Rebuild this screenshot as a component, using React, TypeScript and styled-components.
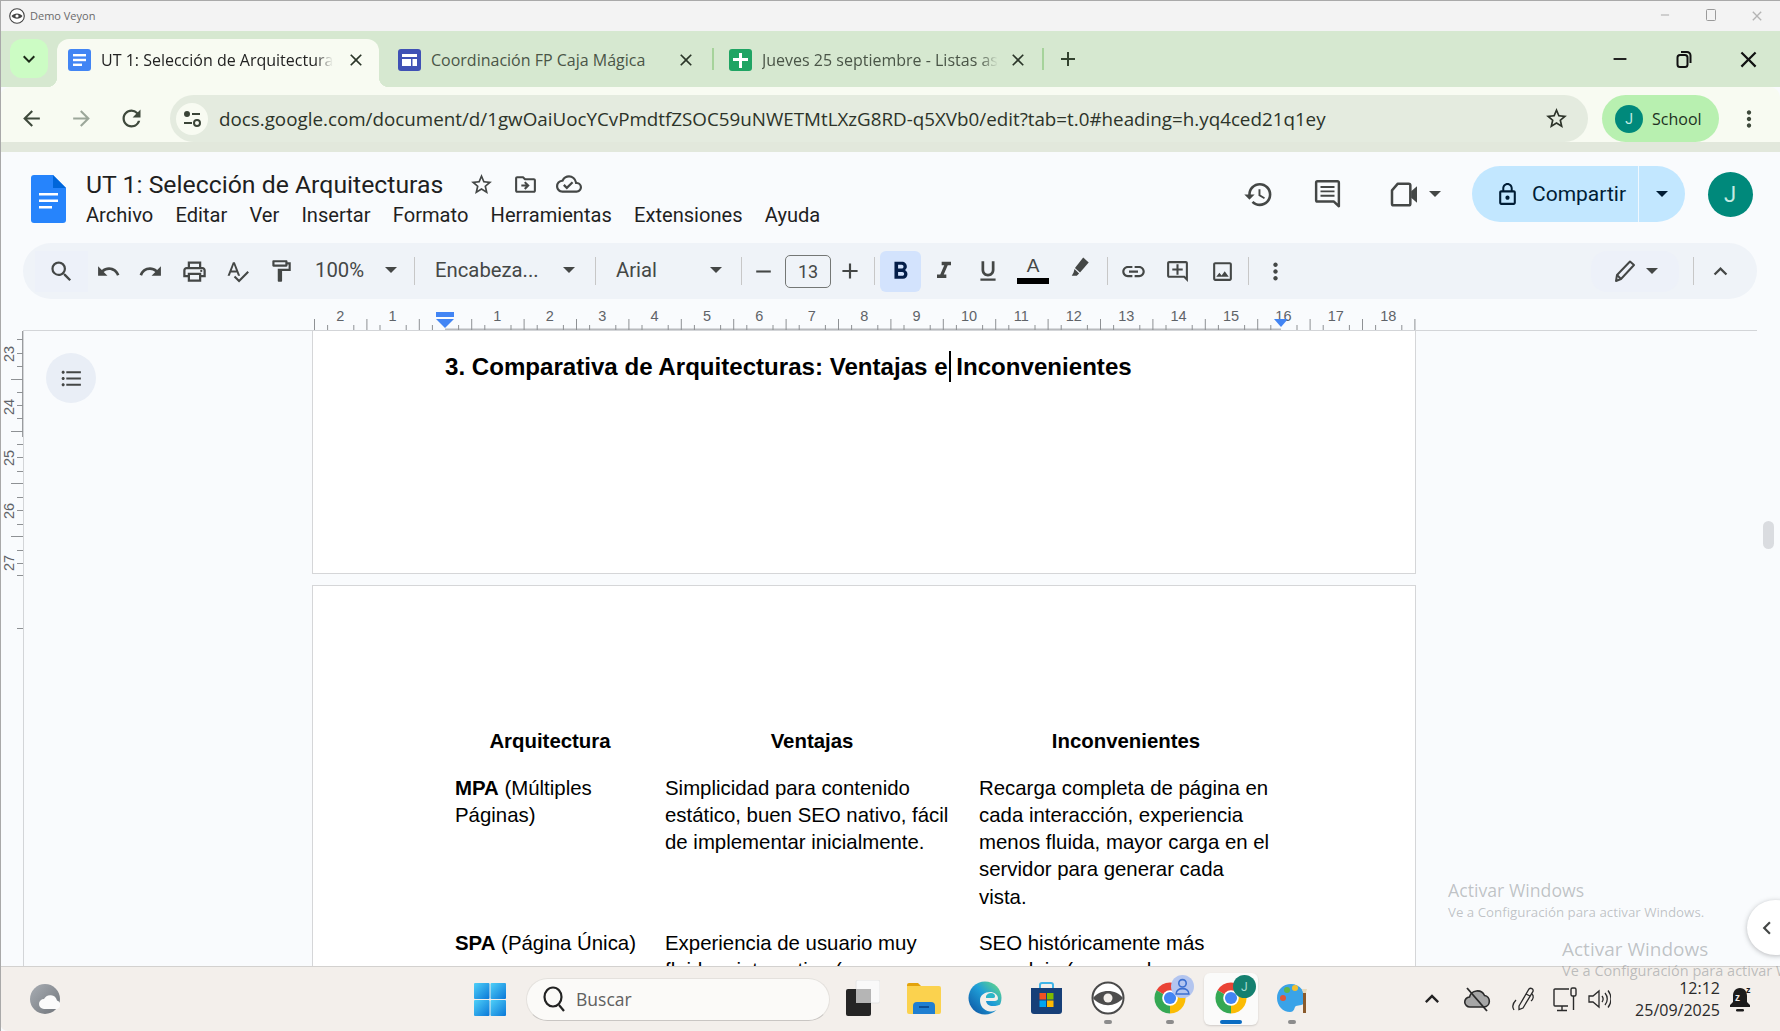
import React from 'react'
import styled, { createGlobalStyle } from 'styled-components'
import {
  MdAdd, MdArrowBack, MdArrowForward, MdClose, MdExpandLess, MdFormatBold, MdFormatItalic,
  MdFormatListBulleted, MdFormatUnderlined, MdHistory, MdKeyboardArrowDown, MdKeyboardArrowUp, MdLink,
  MdLockOutline, MdMoreVert, MdOutlineAddComment, MdOutlineCloudDone, MdOutlineDriveFileMove,
  MdOutlineFormatPaint, MdOutlineImage, MdOutlinePrint, MdRedo, MdRefresh,
  MdRemove, MdSearch, MdSpellcheck, MdStarBorder, MdUndo, MdChevronLeft,
} from 'react-icons/md'

const GlobalStyle = createGlobalStyle`
  html, body { margin: 0; padding: 0; background: #f9fbfd; }
  * { box-sizing: border-box; }
`

const UI = `"Open Sans", "Noto Sans", sans-serif`
const DOCS = `Roboto, "Noto Sans", sans-serif`
const ARIAL = `"Liberation Sans", Arial, sans-serif`

const Screen = styled.div`
  position: relative;
  width: 1780px;
  height: 1031px;
  overflow: hidden;
  display: flex;
  flex-direction: column;
  font-family: ${UI};
  background: #f9fbfd;
  &::after {
    content: '';
    position: absolute;
    inset: 0;
    border-top: 1px solid #a9a9a9;
    border-left: 1px solid #a9a9a9;
    pointer-events: none;
  }
`

/* window title */
const TitleBar = styled.div`
  height: 31px;
  flex: none;
  background: #f3f3f3;
  display: flex;
  align-items: center;
  padding-left: 9px;
  color: #6a6a6a;
  font-size: 11px;
`
const TitleText = styled.span`
  margin-left: 5px;
`
const TitleControls = styled.div`
  margin-left: auto;
  display: flex;
  color: #b4b4b4;
`
const TitleControl = styled.div`
  width: 46px;
  display: flex;
  justify-content: center;
`

/* tabs */
const TabStrip = styled.div`
  height: 56px;
  flex: none;
  background: #d6e8d0;
  display: flex;
  padding-top: 8px;
  color: #3a4a36;
`
const TabMenu = styled.div`
  width: 38px;
  height: 39px;
  margin: 0 9px 0 10px;
  border-radius: 12px;
  background: #ccfcc4;
  display: flex;
  align-items: center;
  justify-content: center;
  color: #1c2a19;
`
const Tab = styled.div<{ $w: number; $pl: number; $pr: number; $sep?: boolean }>`
  position: relative;
  width: ${p => p.$w}px;
  height: 48px;
  padding: 0 ${p => p.$pr}px 6px ${p => p.$pl}px;
  display: flex;
  align-items: center;
  color: #4a5547;
  ${p =>
    p.$sep &&
    `&::after { content: ''; position: absolute; right: 0; top: 9px; height: 22px; width: 2px; background: #a6d39b; }`}
`
const ActiveTab = styled(Tab)`
  background: #f8fbf2;
  border-radius: 12px 12px 0 0;
  color: #222;
  &::before,
  &::after {
    content: '';
    position: absolute;
    bottom: 0;
    width: 10px;
    height: 10px;
  }
  &::before {
    left: -10px;
    background: radial-gradient(circle at 0 0, transparent 10px, #f8fbf2 10.5px);
  }
  &::after {
    right: -10px;
    background: radial-gradient(circle at 100% 0, transparent 10px, #f8fbf2 10.5px);
  }
`
const TabIcon = styled.div<{ $bg: string }>`
  width: 23px;
  height: 22px;
  flex: none;
  border-radius: 3px;
  background: ${p => p.$bg};
  display: flex;
  align-items: center;
  justify-content: center;
`
const TabTitle = styled.div<{ $mr?: number }>`
  flex: 1;
  margin: 0 ${p => p.$mr || 0}px 0 10px;
  white-space: nowrap;
  overflow: hidden;
  font-size: 16px;
  -webkit-mask-image: linear-gradient(to left, transparent 0, #000 18px);
`
const TabTitleFull = styled(TabTitle)`
  -webkit-mask-image: none;
`
const TabClose = styled.div`
  width: 24px;
  flex: none;
  display: flex;
  justify-content: center;
  color: #2a3528;
`
const NewTab = styled.div`
  width: 24px;
  height: 40px;
  margin-left: 12px;
  display: flex;
  align-items: center;
  justify-content: center;
  color: #33432f;
`
const WinControls = styled.div`
  margin-left: auto;
  display: flex;
  height: 40px;
`
const WinControl = styled.div`
  width: 64px;
  display: flex;
  align-items: center;
  justify-content: center;
  color: #111;
`

/* address bar */
const NavBar = styled.div`
  height: 55px;
  flex: none;
  background: #f8fbf2;
  border-radius: 10px 10px 0 0;
  display: flex;
  padding-top: 8px;
  padding-left: 6px;
  color: #3f4a3c;
`
const NavButton = styled.div<{ $dim?: boolean }>`
  width: 50px;
  height: 47px;
  display: flex;
  align-items: center;
  justify-content: center;
  color: ${p => (p.$dim ? '#9ca79a' : '#3f4a3c')};
`
const Omnibox = styled.div`
  width: 1418px;
  height: 47px;
  margin-left: 14px;
  padding: 0 19px 0 6px;
  border-radius: 24px;
  background: #e4ebdf;
  display: flex;
  align-items: center;
`
const SiteChip = styled.div`
  width: 32px;
  height: 32px;
  border-radius: 50%;
  background: #f8fbf2;
  display: flex;
  align-items: center;
  justify-content: center;
`
const UrlText = styled.div`
  margin-left: 11px;
  font-size: 18.8px;
  color: #2c3329;
  white-space: nowrap;
`
const OmniStar = styled.div`
  margin-left: auto;
  display: flex;
  color: #2c3329;
`
const ProfilePill = styled.div`
  width: 117px;
  height: 47px;
  margin-left: 14px;
  padding-left: 13px;
  border-radius: 24px;
  background: #b8f0b0;
  display: flex;
  align-items: center;
  gap: 9px;
  font-size: 16px;
  color: #21301f;
`
const Avatar = styled.div<{ $size: number; $font: number }>`
  width: ${p => p.$size}px;
  height: ${p => p.$size}px;
  flex: none;
  border-radius: 50%;
  background: #00897b;
  color: #c4ebe3;
  font-family: ${DOCS};
  font-size: ${p => p.$font}px;
  display: flex;
  align-items: center;
  justify-content: center;
`
const NavMenu = styled.div`
  width: 30px;
  height: 47px;
  margin-left: 15px;
  display: flex;
  align-items: center;
  justify-content: center;
`
const NavShade = styled.div`
  height: 10px;
  flex: none;
  background: #e2e8dc;
`

/* docs header */
const DocHeader = styled.div`
  height: 91px;
  flex: none;
  display: flex;
  padding: 0 28px 0 31px;
  font-family: ${DOCS};
`
const DocLogo = styled.svg`
  width: 35px;
  height: 48px;
  margin-top: 23px;
  flex: none;
`
const DocTitles = styled.div`
  margin-left: 20px;
  padding-top: 19px;
`
const DocTitleRow = styled.div`
  display: flex;
  align-items: center;
  height: 26px;
  color: #444746;
`
const DocTitle = styled.div`
  font-size: 24.8px;
  color: #1f1f1f;
  margin-right: 16px;
  white-space: nowrap;
`
const TitleIcon = styled.div`
  width: 44px;
  display: flex;
  justify-content: center;
`
const MenuRow = styled.div`
  display: flex;
  gap: 22.2px;
  margin-top: 5px;
  height: 26px;
  align-items: center;
  font-size: 20.1px;
  color: #1f1f1f;
`
const HeaderRight = styled.div`
  margin-left: auto;
  margin-top: 14px;
  height: 56px;
  display: flex;
  align-items: center;
  color: #444746;
`
const HeaderIcon = styled.div<{ $ml?: number }>`
  width: 44px;
  margin-left: ${p => p.$ml || 0}px;
  display: flex;
  justify-content: center;
`
const Caret = styled.span<{ $ml?: number; $color?: string }>`
  display: inline-block;
  flex: none;
  width: 0;
  height: 0;
  margin-left: ${p => p.$ml || 0}px;
  border-left: 6px solid transparent;
  border-right: 6px solid transparent;
  border-top: 6px solid ${p => p.$color || '#444746'};
`
const ShareButton = styled.div`
  width: 213px;
  height: 56px;
  margin-left: 31px;
  border-radius: 28px;
  background: #c2e7ff;
  display: flex;
  color: #001d35;
  font-size: 21px;
`
const ShareMain = styled.div`
  width: 167px;
  padding-left: 23px;
  border-right: 1px solid #f0f8ff;
  display: flex;
  align-items: center;
  gap: 12px;
`
const ShareMore = styled.div`
  flex: 1;
  display: flex;
  align-items: center;
  justify-content: center;
`

/* docs toolbar */
const EditBar = styled.div`
  height: 56px;
  flex: none;
  margin: 0 23px;
  padding: 0 11px 0 12px;
  border-radius: 28px;
  background: #eff3f8;
  display: flex;
  align-items: center;
  color: #444746;
  font-family: ${DOCS};
`
const Cell = styled.div<{ $w: number; $active?: boolean; $tint?: boolean }>`
  width: ${p => p.$w}px;
  height: 41px;
  flex: none;
  display: flex;
  align-items: center;
  justify-content: center;
  border-radius: ${p => (p.$active ? '6px' : '0')};
  background: ${p => (p.$active ? '#d3e3fd' : p.$tint ? '#edf1f9' : 'transparent')};
  color: ${p => (p.$active ? '#041e49' : 'inherit')};
`
const Sep = styled.div<{ $ml?: number; $mr?: number }>`
  width: 1px;
  height: 28px;
  flex: none;
  margin: 0 ${p => p.$mr || 0}px 0 ${p => p.$ml || 0}px;
  background: #c7c7c7;
`
const Dropdown = styled.div<{ $w: number; $pl: number; $pr: number }>`
  width: ${p => p.$w}px;
  padding: 0 ${p => p.$pr}px 2px ${p => p.$pl}px;
  flex: none;
  display: flex;
  align-items: center;
  justify-content: space-between;
  font-size: 20.3px;
`
const SizeBox = styled.div`
  width: 46px;
  height: 33px;
  flex: none;
  border: 1px solid #747775;
  border-radius: 5px;
  display: flex;
  align-items: center;
  justify-content: center;
  font-size: 18px;
`
const ColorA = styled.div`
  width: 32px;
  display: flex;
  flex-direction: column;
  align-items: center;
  font-family: ${ARIAL};
  font-size: 19px;
  line-height: 20px;
  margin-top: -2px;
`
const ColorBar = styled.div`
  width: 100%;
  height: 6px;
  background: #000;
  margin-top: 2px;
`
const HighlighterWrap = styled.div`
  display: flex;
  margin-top: -6px;
`
const ModeCell = styled.div`
  width: 88px;
  height: 41px;
  margin-left: auto;
  flex: none;
  border-radius: 16px;
  background: #edf1f9;
  display: flex;
  align-items: center;
  justify-content: center;
  gap: 9px;
`

/* rulers */
const RulerRow = styled.div`
  height: 32px;
  flex: none;
  margin: 0 23px;
  border-bottom: 1px solid #d3d5d8;
  padding-left: 289px;
`
const RulerSvg = styled.svg`
  display: block;
  overflow: visible;
`
const Workspace = styled.div`
  position: relative;
  flex: none;
  height: 635px;
  overflow: hidden;
  display: flex;
`
const SideRuler = styled.div`
  width: 23px;
  flex: none;
`
const Gutter = styled.div`
  width: 289px;
  flex: none;
  border-left: 1px solid #d3d5d8;
  padding: 22px 0 0 22px;
`
const OutlineButton = styled.div`
  width: 50px;
  height: 50px;
  border-radius: 50%;
  background: #e9eef6;
  display: flex;
  align-items: center;
  justify-content: center;
  color: #444746;
`
const Pages = styled.div`
  width: 1104px;
  flex: none;
  display: flex;
  flex-direction: column;
  gap: 11px;
`
const Page = styled.div<{ $h: number; $first?: boolean }>`
  height: ${p => p.$h}px;
  flex: none;
  background: #fff;
  border: 1px solid #d5d6d8;
  border-top: ${p => (p.$first ? 'none' : '1px solid #d5d6d8')};
  border-bottom: ${p => (p.$first ? '1px solid #d5d6d8' : 'none')};
  overflow: hidden;
  font-family: ${ARIAL};
  color: #000;
`
const Heading = styled.div`
  margin: 19px 0 0 132px;
  font-size: 24.1px;
  line-height: 34px;
  font-weight: 700;
  white-space: nowrap;
`
const TextCursor = styled.span`
  display: inline-block;
  width: 2px;
  height: 31px;
  margin: 0 0 -7px 1px;
  background: #000;
`
const CursorTail = styled.span`
  margin-left: -1px;
`
const Table = styled.div`
  margin: 142px 0 0 132px;
  display: grid;
  grid-template-columns: 210px 314px 314px;
  row-gap: 19.5px;
  font-size: 20.4px;
  line-height: 27.2px;
`
const HeadCell = styled.div`
  text-align: center;
  font-weight: 700;
`
const BodyCell = styled.div`
  padding: 0 10px;
  white-space: nowrap;
`
const Scrollbar = styled.div`
  position: absolute;
  top: 190px;
  right: 6px;
  width: 11px;
  height: 28px;
  border-radius: 6px;
  background: #dadce0;
`
const SideToggle = styled.div`
  position: absolute;
  top: 569px;
  right: -24px;
  width: 57px;
  height: 55px;
  padding-left: 7px;
  border-radius: 50%;
  background: #fff;
  box-shadow: 0 1px 5px rgba(60, 64, 67, 0.35);
  display: flex;
  align-items: center;
  color: #444746;
`

/* watermarks */
const Watermark = styled.div<{ $left: number; $top: number }>`
  position: absolute;
  left: ${p => p.$left}px;
  top: ${p => p.$top}px;
  color: rgba(110, 115, 120, 0.42);
  white-space: nowrap;
  pointer-events: none;
  z-index: 3;
`
const WatermarkTitle = styled.div<{ $size: number }>`
  font-size: ${p => p.$size}px;
  line-height: 25px;
`
const WatermarkSub = styled.div<{ $size: number }>`
  font-size: ${p => p.$size}px;
  line-height: 18px;
`

/* taskbar */
const Taskbar = styled.div`
  height: 65px;
  flex: none;
  background: #f3efeb;
  border-top: 1px solid #d3d1cf;
  border-radius: 0 0 0 8px;
  display: flex;
  align-items: center;
  padding: 0 18px 0 30px;
`
const WeatherIcon = styled.svg`
  width: 30px;
  height: 34px;
  flex: none;
`
const StartIcon = styled.svg`
  width: 32px;
  height: 33px;
  margin-left: 414px;
  flex: none;
`
const SearchPill = styled.div`
  width: 304px;
  height: 43px;
  margin: 0 2px 0 20px;
  padding-left: 15px;
  border-radius: 22px;
  background: #fbfaf8;
  border: 1px solid #e4e1dd;
  border-bottom-color: #c9c6c3;
  display: flex;
  align-items: center;
  gap: 9px;
  font-size: 17.5px;
  color: #606060;
`
const TaskCell = styled.div<{ $active?: boolean }>`
  position: relative;
  width: 61.4px;
  height: 52px;
  flex: none;
  display: flex;
  align-items: center;
  justify-content: center;
  padding-bottom: 2px;
  &::before {
    content: '';
    position: absolute;
    inset: 0 4px;
    border-radius: 6px;
    background: ${p => (p.$active ? '#fbfbfa' : 'transparent')};
    box-shadow: ${p => (p.$active ? '0 1px 2px rgba(0,0,0,.15)' : 'none')};
  }
  & > * {
    position: relative;
  }
`
const RunDot = styled.div<{ $active?: boolean }>`
  position: absolute !important;
  bottom: 1px;
  left: 50%;
  transform: translateX(-50%);
  width: ${p => (p.$active ? 22 : 8)}px;
  height: 4px;
  border-radius: 2px;
  background: ${p => (p.$active ? '#0a6cc2' : '#8c8c8c')};
`
const ProfileBadge = styled.div<{ $bg: string }>`
  position: absolute !important;
  top: 2px;
  right: 6px;
  width: 23px;
  height: 23px;
  border-radius: 50%;
  background: ${p => p.$bg};
  color: #a9dcd2;
  font-size: 12px;
  font-family: ${DOCS};
  display: flex;
  align-items: center;
  justify-content: center;
`
const Tray = styled.div`
  margin-left: auto;
  display: flex;
  align-items: center;
  color: #222;
`
const TrayCell = styled.div<{ $w: number }>`
  width: ${p => p.$w}px;
  flex: none;
  display: flex;
  justify-content: center;
`
const Clock = styled.div`
  width: 108px;
  text-align: right;
  font-size: 16px;
  line-height: 22px;
  color: #2a2a2a;
`

const ChromeIcon = ({ size }: { size: number }) => (
  <svg width={size} height={size} viewBox="0 0 48 48">
    <path d="M24 24L43.05 13A22 22 0 0 0 4.95 13Z" fill="#ea4335" />
    <path d="M24 24L4.95 13A22 22 0 0 0 24 46Z" fill="#34a853" />
    <path d="M24 24L24 46A22 22 0 0 0 43.05 13Z" fill="#fbbc04" />
    <circle cx="24" cy="24" r="11" fill="#fff" />
    <circle cx="24" cy="24" r="8.6" fill="#4285f4" />
  </svg>
)

const TabDocIcon = () => (
  <svg width="13" height="12" viewBox="0 0 13 12" fill="#fff">
    <rect y="0" width="13" height="2.4" />
    <rect y="4.8" width="13" height="2.4" />
    <rect y="9.6" width="9" height="2.4" />
  </svg>
)
const TabFormIcon = () => (
  <svg width="15" height="12" viewBox="0 0 15 12" fill="#fff">
    <rect width="15" height="3" />
    <rect y="5" width="9" height="7" />
    <rect x="10.5" y="5" width="4.5" height="7" />
  </svg>
)
const TabSheetIcon = () => (
  <svg width="15" height="15" viewBox="0 0 15 15" fill="#fff">
    <rect y="5" width="15" height="3" />
    <rect x="6" width="3" height="15" />
  </svg>
)

const SiteInfoIcon = () => (
  <svg width="18" height="20" viewBox="0 0 18 20" fill="none" stroke="#3a4437" strokeWidth="2">
    <circle cx="4" cy="5" r="2" fill="#3a4437" />
    <path d="M9 5h8" />
    <path d="M1 14h8" />
    <circle cx="14" cy="14" r="3" />
  </svg>
)

const RestoreIcon = () => (
  <svg width="16" height="18" viewBox="0 0 16 18" fill="none" stroke="#111" strokeWidth="2">
    <rect x="1.5" y="5" width="10" height="12" rx="2.5" />
    <path d="M5 2h6a3.5 3.5 0 0 1 3.5 3.5V13" />
  </svg>
)

const HighlighterIcon = () => (
  <svg width="22" height="24" viewBox="0 0 24 26" fill="#444746">
    <path d="M15.5 1.5L21.5 7L12 18L6.5 13Z" />
    <path d="M6 14L11 19L8.5 21.5L3 21.5L5 18Z" />
  </svg>
)

const PencilIcon = () => (
  <svg width="24" height="24" viewBox="0 0 24 24" fill="none" stroke="#444746" strokeWidth="2" strokeLinejoin="round">
    <path d="M3 22L4 16L17 2.5L21 6L8 20Z" />
    <path d="M4 16L8 20" />
  </svg>
)

const CommentLinesIcon = () => (
  <svg width="27" height="28" viewBox="0 0 30 32" fill="none" stroke="#444746" strokeWidth="2.8">
    <path d="M28 30V3a1.5 1.5 0 0 0-1.5-1.5H3.500A1.5 1.5 0 0 0 2 3v20a1.5 1.5 0 0 0 1.5 1.5H22Z" strokeLinejoin="round" />
    <path d="M7 8h16M7 13h16M7 18h16" strokeWidth="2.2" />
  </svg>
)

const VideoIcon = () => (
  <svg width="29" height="25" viewBox="0 0 34 30" fill="none">
    <path d="M9 2h13a2 2 0 0 1 2 2v22a2 2 0 0 1-2 2H4a2 2 0 0 1-2-2V10Z" stroke="#444746" strokeWidth="3" strokeLinejoin="round" />
    <path d="M25 11l7-6v20l-7-6Z" fill="#444746" />
  </svg>
)

const CloudOffIcon = () => (
  <svg width="28" height="26" viewBox="0 0 28 26">
    <path d="M7 21a5 5 0 0 1-.5-10A8 8 0 0 1 21.5 9.5 5.8 5.8 0 0 1 21 21Z" fill="#a6a6a6" stroke="#2a2a2a" strokeWidth="1.6" />
    <path d="M4 2L24 25" stroke="#2a2a2a" strokeWidth="1.8" />
  </svg>
)

const ruleXTicks = Array.from({ length: 85 }, (_, i) => i - 10).filter(k => 133 + k * 13.1 <= 1104)
const sideTicks = [339, 366, 392, 418, 444, 471, 497, 524, 550, 575, 628]
const sideLongTicks = [379, 431, 483, 536]
const sideNumbers: [string, number][] = [['23', 354], ['24', 407], ['25', 458], ['26', 511], ['27', 563]]

const TopRuler = () => (
  <RulerSvg width="1104" height="31" viewBox="0 0 1104 31">
    <rect x="133" y="29.5" width="836" height="1.5" fill="#b8babd" />
    {ruleXTicks.map(k => {
      const x = 133 + k * 13.1
      const m = ((k % 4) + 4) % 4
      if (m === 0) return null
      return <rect key={k} x={x} y={m === 2 ? 20 : 26} width="1" height={m === 2 ? 11 : 5} fill="#8e9194" />
    })}
    {ruleXTicks
      .filter(k => k % 4 === 0 && k !== 0)
      .map(k => (
        <text key={k} x={133 + k * 13.1} y="22" textAnchor="middle" fontFamily={ARIAL} fontSize="14.5" fill="#5f6368">
          {Math.abs(k / 4)}
        </text>
      ))}
    <rect x="124" y="13" width="18" height="5" fill="#4285f4" />
    <path d="M124 20H142L133 29Z" fill="#4285f4" />
    <path d="M962 20H976L969 28Z" fill="#4285f4" />
  </RulerSvg>
)

const LeftRuler = () => (
  <RulerSvg width="23" height="635" viewBox="0 331 23 635">
    <rect x="22" y="331" width="1" height="106" fill="#9a9c9f" />
    {sideTicks.map(y => (
      <rect key={y} x="17" y={y} width="6" height="1" fill="#8e9194" />
    ))}
    {[353, 405, 457, 510, 563].map(y => (
      <rect key={y} x="17" y={y} width="6" height="1" fill="#8e9194" />
    ))}
    {sideLongTicks.map(y => (
      <rect key={y} x="11" y={y} width="12" height="1" fill="#8e9194" />
    ))}
    {sideNumbers.map(([n, y]) => (
      <text key={n} transform={`translate(14 ${y}) rotate(-90)`} textAnchor="middle" fontFamily={ARIAL} fontSize="14.5" fill="#5f6368">
        {n}
      </text>
    ))}
  </RulerSvg>
)

const App = () => (
  <Screen>
    <GlobalStyle />
    <TitleBar>
      <svg width="16" height="16" viewBox="0 0 16 16">
        <circle cx="8" cy="8" r="7.3" fill="#fff" stroke="#444" strokeWidth="1.1" />
        <path d="M2.5 8C5 4.5 11 4.5 13.5 8C11 11.5 5 11.5 2.5 8Z" fill="#444" />
        <circle cx="8" cy="8" r="1.6" fill="#fff" />
      </svg>
      <TitleText>Demo Veyon</TitleText>
      <TitleControls>
        <TitleControl>
          <MdRemove size={14} />
        </TitleControl>
        <TitleControl>
          <svg width="12" height="14" viewBox="0 0 12 14" fill="none" stroke="#9a9a9a">
            <rect x="1.5" y="1.5" width="9" height="11" rx="1" />
          </svg>
        </TitleControl>
        <TitleControl>
          <MdClose size={16} />
        </TitleControl>
      </TitleControls>
    </TitleBar>

    <TabStrip>
      <TabMenu>
        <MdKeyboardArrowDown size={24} />
      </TabMenu>
      <ActiveTab $w={322} $pl={11} $pr={11}>
        <TabIcon $bg="#4285f4">
          <TabDocIcon />
        </TabIcon>
        <TabTitle $mr={11}>UT 1: Selección de Arquitecturas</TabTitle>
        <TabClose>
          <MdClose size={20} />
        </TabClose>
      </ActiveTab>
      <Tab $w={335} $pl={19} $pr={16} $sep>
        <TabIcon $bg="#3f51b5">
          <TabFormIcon />
        </TabIcon>
        <TabTitleFull>Coordinación FP Caja Mágica</TabTitleFull>
        <TabClose>
          <MdClose size={20} />
        </TabClose>
      </Tab>
      <Tab $w={330} $pl={15} $pr={14} $sep>
        <TabIcon $bg="#1fa463">
          <TabSheetIcon />
        </TabIcon>
        <TabTitle $mr={8}>Jueves 25 septiembre - Listas asistencia</TabTitle>
        <TabClose>
          <MdClose size={20} />
        </TabClose>
      </Tab>
      <NewTab>
        <MdAdd size={26} />
      </NewTab>
      <WinControls>
        <WinControl>
          <MdRemove size={22} />
        </WinControl>
        <WinControl>
          <RestoreIcon />
        </WinControl>
        <WinControl>
          <MdClose size={27} />
        </WinControl>
      </WinControls>
    </TabStrip>

    <NavBar>
      <NavButton>
        <MdArrowBack size={25} />
      </NavButton>
      <NavButton $dim>
        <MdArrowForward size={25} />
      </NavButton>
      <NavButton>
        <MdRefresh size={27} />
      </NavButton>
      <Omnibox>
        <SiteChip>
          <SiteInfoIcon />
        </SiteChip>
        <UrlText>docs.google.com/document/d/1gwOaiUocYCvPmdtfZSOC59uNWETMtLXzG8RD-q5XVb0/edit?tab=t.0#heading=h.yq4ced21q1ey</UrlText>
        <OmniStar>
          <MdStarBorder size={25} />
        </OmniStar>
      </Omnibox>
      <ProfilePill>
        <Avatar $size={28} $font={14}>J</Avatar>
        School
      </ProfilePill>
      <NavMenu>
        <MdMoreVert size={26} />
      </NavMenu>
    </NavBar>
    <NavShade />

    <DocHeader>
      <DocLogo viewBox="0 0 35 48">
        <path d="M22 0H3a3 3 0 0 0-3 3v42a3 3 0 0 0 3 3h29a3 3 0 0 0 3-3V13z" fill="#2684fc" />
        <path d="M22 0l13 13H22z" fill="#0066da" />
        <path d="M8 18h19v2.4H8zM8 24.5h19v2.4H8zM8 31h13v2.4H8z" fill="#fff" />
      </DocLogo>
      <DocTitles>
        <DocTitleRow>
          <DocTitle>UT 1: Selección de Arquitecturas</DocTitle>
          <TitleIcon>
            <MdStarBorder size={25} />
          </TitleIcon>
          <TitleIcon>
            <MdOutlineDriveFileMove size={25} />
          </TitleIcon>
          <TitleIcon>
            <MdOutlineCloudDone size={26} />
          </TitleIcon>
        </DocTitleRow>
        <MenuRow>
          <span>Archivo</span>
          <span>Editar</span>
          <span>Ver</span>
          <span>Insertar</span>
          <span>Formato</span>
          <span>Herramientas</span>
          <span>Extensiones</span>
          <span>Ayuda</span>
        </MenuRow>
      </DocTitles>
      <HeaderRight>
        <HeaderIcon>
          <MdHistory size={31} />
        </HeaderIcon>
        <HeaderIcon $ml={25}>
          <CommentLinesIcon />
        </HeaderIcon>
        <HeaderIcon $ml={33}>
          <VideoIcon />
        </HeaderIcon>
        <Caret $ml={3} />
        <ShareButton>
          <ShareMain>
            <MdLockOutline size={25} />
            Compartir
          </ShareMain>
          <ShareMore>
            <Caret $color="#001d35" />
          </ShareMore>
        </ShareButton>
        <HeaderIcon $ml={23}>
          <Avatar $size={45} $font={22}>J</Avatar>
        </HeaderIcon>
      </HeaderRight>
    </DocHeader>

    <EditBar>
      <Cell $w={53} $tint><MdSearch size={27} /></Cell>
      <Cell $w={41}><MdUndo size={25} /></Cell>
      <Cell $w={43}><MdRedo size={25} /></Cell>
      <Cell $w={44}><MdOutlinePrint size={27} /></Cell>
      <Cell $w={43}><MdSpellcheck size={25} /></Cell>
      <Cell $w={43}><MdOutlineFormatPaint size={26} /></Cell>
      <Dropdown $w={112} $pl={13} $pr={17}>100%<Caret /></Dropdown>
      <Sep />
      <Dropdown $w={180} $pl={20} $pr={20}>Encabeza...<Caret /></Dropdown>
      <Sep />
      <Dropdown $w={145} $pl={20} $pr={19}>Arial<Caret /></Dropdown>
      <Sep />
      <Cell $w={43}><MdRemove size={25} /></Cell>
      <SizeBox>13</SizeBox>
      <Cell $w={38}><MdAdd size={26} /></Cell>
      <Sep $ml={5} $mr={5} />
      <Cell $w={41} $active><MdFormatBold size={29} /></Cell>
      <Cell $w={46}><MdFormatItalic size={28} /></Cell>
      <Cell $w={42}><MdFormatUnderlined size={26} /></Cell>
      <Cell $w={48}>
        <ColorA>
          A
          <ColorBar />
        </ColorA>
      </Cell>
      <Cell $w={46}>
        <HighlighterWrap>
          <HighlighterIcon />
        </HighlighterWrap>
      </Cell>
      <Sep $ml={4} />
      <Cell $w={50}><MdLink size={27} /></Cell>
      <Cell $w={38}><MdOutlineAddComment size={25} /></Cell>
      <Cell $w={52}><MdOutlineImage size={25} /></Cell>
      <Sep />
      <Cell $w={52}><MdMoreVert size={27} /></Cell>
      <ModeCell>
        <PencilIcon />
        <Caret />
      </ModeCell>
      <Sep $ml={14} />
      <Cell $w={52}><MdExpandLess size={27} /></Cell>
    </EditBar>

    <RulerRow>
      <TopRuler />
    </RulerRow>

    <Workspace>
      <SideRuler>
        <LeftRuler />
      </SideRuler>
      <Gutter>
        <OutlineButton>
          <MdFormatListBulleted size={25} />
        </OutlineButton>
      </Gutter>
      <Pages>
        <Page $h={243} $first>
          <Heading>
            3. Comparativa de Arquitecturas: Ventajas e<TextCursor /><CursorTail> Inconvenientes</CursorTail>
          </Heading>
        </Page>
        <Page $h={381}>
          <Table>
            <HeadCell>Arquitectura</HeadCell>
            <HeadCell>Ventajas</HeadCell>
            <HeadCell>Inconvenientes</HeadCell>
            <BodyCell>
              <b>MPA</b> (Múltiples
              <br />
              Páginas)
            </BodyCell>
            <BodyCell>
              Simplicidad para contenido
              <br />
              estático, buen SEO nativo, fácil
              <br />
              de implementar inicialmente.
            </BodyCell>
            <BodyCell>
              Recarga completa de página en
              <br />
              cada interacción, experiencia
              <br />
              menos fluida, mayor carga en el
              <br />
              servidor para generar cada
              <br />
              vista.
            </BodyCell>
            <BodyCell>
              <b>SPA</b> (Página Única)
            </BodyCell>
            <BodyCell>
              Experiencia de usuario muy
              <br />
              fluida e interactiva (como
            </BodyCell>
            <BodyCell>
              SEO históricamente más
              <br />
              complejo (aunque ha
            </BodyCell>
          </Table>
        </Page>
      </Pages>
      <Scrollbar />
      <SideToggle>
        <MdChevronLeft size={26} />
      </SideToggle>
    </Workspace>

    <Taskbar>
      <WeatherIcon viewBox="0 0 30 34">
        <defs>
          <linearGradient id="moon" x1="0" y1="0" x2="1" y2="1">
            <stop offset="0" stopColor="#a9aeb4" />
            <stop offset="1" stopColor="#6f747a" />
          </linearGradient>
        </defs>
        <circle cx="15" cy="17" r="15" fill="url(#moon)" />
        <path d="M14 27a5 5 0 0 1 0-10 7 7 0 0 1 13 1.5 4.4 4.4 0 0 1 0 8.5Z" fill="#fbfbfb" />
      </WeatherIcon>
      <StartIcon viewBox="0 0 32 33">
        <defs>
          <linearGradient id="win" x1="0" y1="0" x2="1" y2="1">
            <stop offset="0" stopColor="#4fd0f8" />
            <stop offset="1" stopColor="#0a78d8" />
          </linearGradient>
        </defs>
        <rect width="15.5" height="16" rx="1" fill="url(#win)" />
        <rect x="16.5" width="15.5" height="16" rx="1" fill="url(#win)" />
        <rect y="17" width="15.5" height="16" rx="1" fill="url(#win)" />
        <rect x="16.5" y="17" width="15.5" height="16" rx="1" fill="url(#win)" />
      </StartIcon>
      <SearchPill>
        <svg width="25" height="28" viewBox="0 0 25 28" fill="none" stroke="#222" strokeWidth="2.2">
          <ellipse cx="11" cy="12" rx="8.5" ry="9.5" />
          <path d="M17 20L22 26" />
        </svg>
        Buscar
      </SearchPill>
      <TaskCell>
        <svg width="34" height="36" viewBox="0 0 34 36">
          <rect x="10" y="0" width="24" height="23" rx="2" fill="#f9f9f9" stroke="#e4e4e4" />
          <rect x="0" y="9" width="25" height="27" rx="2" fill="#252525" />
          <rect x="10" y="9" width="15" height="14" fill="#b5b5b5" />
        </svg>
      </TaskCell>
      <TaskCell>
        <svg width="34" height="33" viewBox="0 0 34 33">
          <path d="M0 3a2 2 0 0 1 2-2h9l3 3H0Z" fill="#e3a30c" />
          <path d="M0 4h32a2 2 0 0 1 2 2v24a2 2 0 0 1-2 2H2a2 2 0 0 1-2-2Z" fill="#fbd24e" />
          <path d="M6 32V24a4 4 0 0 1 4-4h14a4 4 0 0 1 4 4v8Z" fill="#1f7fd1" />
          <rect x="12" y="24" width="10" height="2" fill="#0c4f96" />
        </svg>
      </TaskCell>
      <TaskCell>
        <svg width="34" height="34" viewBox="0 0 34 34">
          <defs>
            <linearGradient id="edge" x1="0" y1="1" x2="1" y2="0">
              <stop offset="0" stopColor="#0b4f9e" />
              <stop offset="0.55" stopColor="#1f9fd8" />
              <stop offset="1" stopColor="#6fe07a" />
            </linearGradient>
          </defs>
          <circle cx="17" cy="17" r="16.5" fill="url(#edge)" />
          <path d="M12 19c0-5 5-8 10-8 4 0 8 2.5 8 6.5 0 2-2 2.5-5 2.5h-7c.4 3 3 5 7 5 3 0 6-.6 9-2.5v3c-3 3.6-8 5-12 5-7-1-10-6-10-11.5Z" fill="#f3efeb" />
          <path d="M18 15c1-2 3-3 5-3 2.6 0 4 1.3 4 3.4 0 1-1 1.6-3 1.6h-6Z" fill="#2cb6c9" />
        </svg>
      </TaskCell>
      <TaskCell>
        <svg width="33" height="33" viewBox="0 0 33 33">
          <path d="M10 7V3a2 2 0 0 1 2-2h9a2 2 0 0 1 2 2v4" fill="none" stroke="#3fb4e8" strokeWidth="2" />
          <path d="M1 6h31v23a3 3 0 0 1-3 3H4a3 3 0 0 1-3-3Z" fill="#163f78" />
          <rect x="9.5" y="11" width="6.5" height="6.5" fill="#f25022" />
          <rect x="17" y="11" width="6.5" height="6.5" fill="#7fba00" />
          <rect x="9.5" y="18.5" width="6.5" height="6.5" fill="#00a4ef" />
          <rect x="17" y="18.5" width="6.5" height="6.5" fill="#ffb900" />
        </svg>
      </TaskCell>
      <TaskCell>
        <svg width="34" height="34" viewBox="0 0 34 34">
          <circle cx="17" cy="17" r="15.5" fill="#fff" stroke="#4a4a4a" strokeWidth="2" />
          <path d="M2 17C9 7.5 25 7.5 32 17C25 26.5 9 26.5 2 17Z" fill="#4d4d4d" />
          <circle cx="17" cy="17" r="4.5" fill="#f3efeb" />
        </svg>
        <RunDot />
      </TaskCell>
      <TaskCell>
        <ChromeIcon size={34} />
        <ProfileBadge $bg="#b3c5ef">
          <svg width="15" height="17" viewBox="0 0 14 16" fill="none" stroke="#3b6fd0" strokeWidth="1.5">
            <circle cx="7" cy="5" r="3.5" />
            <path d="M1 15c0-3.5 3-5 6-5s6 1.5 6 5Z" />
          </svg>
        </ProfileBadge>
        <RunDot />
      </TaskCell>
      <TaskCell $active>
        <ChromeIcon size={34} />
        <ProfileBadge $bg="#14806f">J</ProfileBadge>
        <RunDot $active />
      </TaskCell>
      <TaskCell>
        <svg width="33" height="34" viewBox="0 0 33 34">
          <path d="M15 3C7 3 1 9 1 17s6 14 13 14c5 0 4-5 6-6 3-1 8 0 9-5C30 11 24 3 15 3Z" fill="#3aa3e8" />
          <circle cx="7" cy="17" r="3" fill="#e0553a" />
          <circle cx="11" cy="9" r="3" fill="#5fb548" />
          <circle cx="19" cy="7" r="3" fill="#f3c030" />
          <path d="M26 8h5l-1 4h-3Z" fill="#e7d9b9" />
          <rect x="27" y="12" width="3" height="20" fill="#8a5a2b" />
        </svg>
        <RunDot />
      </TaskCell>
      <Tray>
        <TrayCell $w={40}>
          <MdKeyboardArrowUp size={28} />
        </TrayCell>
        <TrayCell $w={50}>
          <CloudOffIcon />
        </TrayCell>
        <TrayCell $w={42}>
          <svg width="24" height="26" viewBox="0 0 24 26" fill="none" stroke="#2a2a2a" strokeWidth="1.3">
            <path d="M8 20L18 3a2.4 2.4 0 0 1 4 2.4L12 22L8 23.5Z" />
            <path d="M15 8L19 10" />
            <path d="M5 14C2 17 1 21 3 24" />
            <path d="M21 8c2 2 1.5 5-1 7" />
          </svg>
        </TrayCell>
        <TrayCell $w={42}>
          <svg width="24" height="26" viewBox="0 0 24 26" fill="none" stroke="#2a2a2a" strokeWidth="1.4">
            <path d="M16 3H2a1 1 0 0 0-1 1v15a1 1 0 0 0 1 1h13" />
            <path d="M9 20v4M4 24.5h10" />
            <rect x="18" y="2" width="5" height="8" rx="1.5" />
            <path d="M20.5 10v14" />
          </svg>
        </TrayCell>
        <TrayCell $w={26}>
          <svg width="24" height="24" viewBox="0 0 24 24" fill="none" stroke="#2a2a2a" strokeWidth="1.3">
            <path d="M2 9h4l6-5v16l-6-5H2Z" />
            <path d="M15 9c1.5 2 1.5 4 0 6" />
            <path d="M18 6c3 3.5 3 8.5 0 12" />
            <path d="M21 3.5c4 5 4 12 0 17" />
          </svg>
        </TrayCell>
        <Clock>
          12:12
          <br />
          25/09/2025
        </Clock>
        <TrayCell $w={42}>
          <svg width="24" height="28" viewBox="0 0 24 28">
            <path d="M11 3c-5 0-7 4-7 8v6l-3 3v2h20v-2l-3-3v-6c0-4-2-8-7-8Z" fill="#1c1c1c" />
            <rect x="7" y="24" width="8" height="2.5" rx="1.2" fill="#1c1c1c" />
            <text x="6" y="16" fontSize="10" fontWeight="700" fontFamily={ARIAL} fill="#f3efeb">z</text>
            <text x="17" y="8" fontSize="9" fontWeight="700" fontFamily={ARIAL} fill="#1c1c1c">z</text>
          </svg>
        </TrayCell>
      </Tray>
    </Taskbar>

    <Watermark $left={1448} $top={878}>
      <WatermarkTitle $size={17.7}>Activar Windows</WatermarkTitle>
      <WatermarkSub $size={13.3}>Ve a Configuración para activar Windows.</WatermarkSub>
    </Watermark>
    <Watermark $left={1562} $top={937}>
      <WatermarkTitle $size={19}>Activar Windows</WatermarkTitle>
      <WatermarkSub $size={14.5}>Ve a Configuración para activar Windows.</WatermarkSub>
    </Watermark>
  </Screen>
)

export default App
